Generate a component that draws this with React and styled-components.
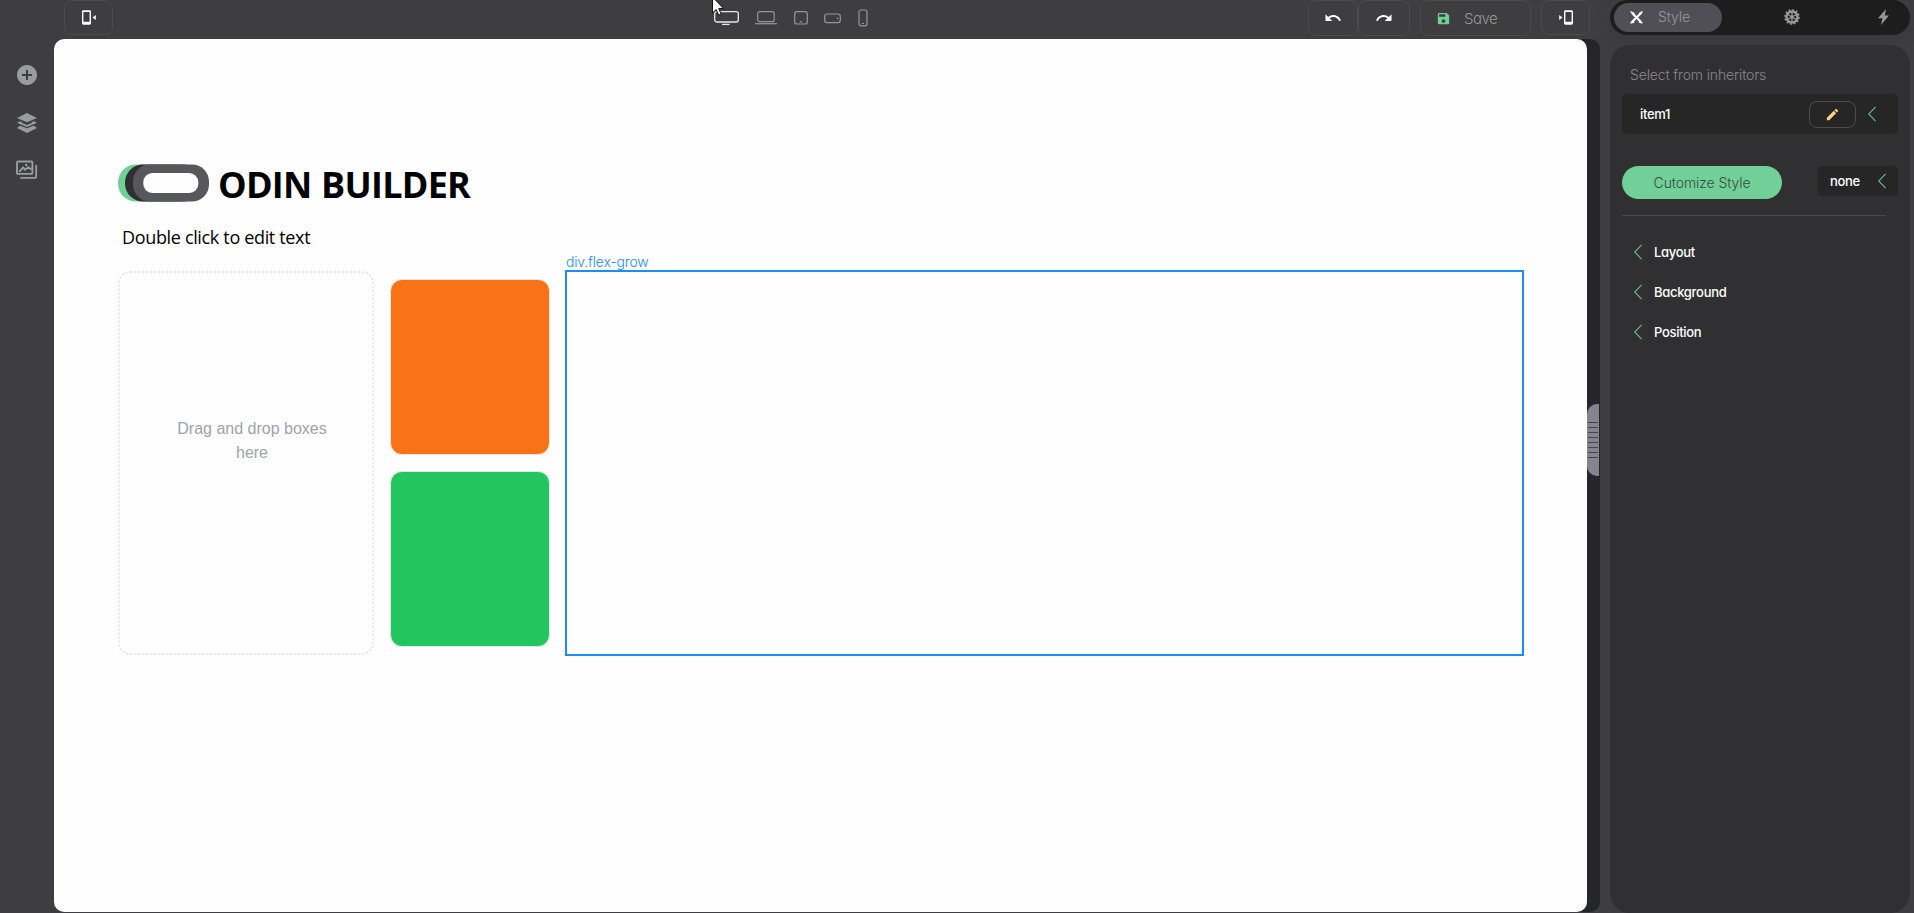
import React from "react";
import styled, { createGlobalStyle } from "styled-components";
import { MdUndo, MdRedo, MdSave, MdAddCircle, MdEdit } from "react-icons/md";

const Global = createGlobalStyle`
  * { box-sizing: border-box; }
  html, body { margin: 0; height: 100%; overflow: hidden; background: #3e3e40; }
  button { font: inherit; color: inherit; background: none; padding: 0; }
  svg { display: block; flex: none; }
`;

const Shell = styled.div`
  display: flex;
  width: 1914px;
  height: 913px;
  background: #3e3e40;
  font-family: Inter, "Liberation Sans", sans-serif;
  font-feature-settings: "cv11";
  color: #fff;
`;

const Workspace = styled.div`
  display: flex;
  flex-direction: column;
  width: 1600px;
  height: 912px;
`;

const Toolbar = styled.header`
  display: flex;
  align-items: flex-start;
  height: 39px;
  padding: 0 10px 0 64px;
`;

const ToolGroup = styled.div`
  display: flex;
  gap: ${(p) => p.$gap || 0}px;
`;

const ToolButton = styled.button`
  display: flex;
  align-items: center;
  justify-content: center;
  width: ${(p) => p.$w || 49}px;
  height: ${(p) => p.$h || 35}px;
  border: 1px solid #4b4b4e;
  border-radius: 8px;
`;

const Label = styled.span`
  font-size: ${(p) => p.$size || 14}px;
  font-weight: ${(p) => p.$weight || 300};
  letter-spacing: ${(p) => p.$ls || 0}px;
  color: ${(p) => p.$color || "#98989b"};
  line-height: 20px;
  white-space: nowrap;
`;

const StrongLabel = styled(Label)`
  font-size: 13px;
  font-weight: 500;
  letter-spacing: -0.3px;
  color: #fff;
`;

const SaveButton = styled(ToolButton)`
  justify-content: flex-start;
  padding: 1px 0 0 15px;
  gap: 13px;
`;

const Devices = styled.div`
  display: flex;
  height: 36px;
  align-items: center;
  gap: 16.4px;
  margin: 0 auto 0 601px;
  color: #97979a;
`;

const Cursor = styled.svg`
  position: absolute;
  left: 711px;
  top: -4px;
`;

const Body = styled.div`
  display: flex;
  flex: 1;
`;

const Sidebar = styled.nav`
  display: flex;
  flex-direction: column;
  align-items: center;
  width: 54px;
  padding-top: 24px;
  gap: 26px;
  color: #9b9c9f;
`;

const Stage = styled.main`
  display: flex;
  align-items: center;
  width: 1546px;
  background: #252629;
  border-radius: 10px;
`;

const Page = styled.section`
  width: 1533px;
  height: 873px;
  padding: 125px 63px 0 64px;
  background: #fefefe;
  border-radius: 10px;
`;

const Handle = styled.div`
  display: flex;
  flex-direction: column;
  gap: 4px;
  width: 12px;
  height: 72px;
  margin-top: -72px;
  padding: 18px 1px 0;
  background: #858490;
  border-radius: 10px 0 0 10px;
`;

const Grip = styled.i`
  height: 1px;
  background: #44444d;
`;

const Brand = styled.div`
  display: flex;
  align-items: center;
  height: 38px;
  gap: 8px;
`;

const Title = styled.h1`
  margin: 4px 0 0;
  color: #000;
  font: 700 36px/38px "Open Sans", sans-serif;
  letter-spacing: -0.75px;
  word-spacing: 1px;
  white-space: nowrap;
`;

const Subtitle = styled.p`
  margin: 23px 0 22px 4px;
  color: #000;
  font: 400 18px/24px "Open Sans", sans-serif;
  letter-spacing: -0.34px;
`;

const Boxes = styled.div`
  display: flex;
  height: 385px;
`;

const DropZone = styled.div`
  display: flex;
  align-items: center;
  justify-content: center;
  width: 256px;
  height: 384px;
  padding: 0 43px 45px 55px;
  margin-right: 16px;
  border: 2px dotted #e5e7eb;
  border-radius: 12px;
  color: #9ca3af;
  font: 400 16px/24px "Liberation Sans", sans-serif;
  text-align: center;
`;

const Tiles = styled.div`
  display: flex;
  flex-direction: column;
  gap: 16px;
  width: 160px;
  padding-top: 8px;
  margin-right: 15px;
`;

const Tile = styled.div`
  height: 176px;
  border: 1px solid #e5e7eb;
  border-radius: 12px;
  background: ${(p) => p.$color};
`;

const Selected = styled.div`
  position: relative;
  flex: 1;
  margin-top: -1px;
  border: 2px solid #1d8df2;
`;

const Tag = styled(Label)`
  position: absolute;
  left: -1px;
  top: -20px;
`;

const Inspector = styled.aside`
  display: flex;
  flex-direction: column;
  gap: 10px;
  width: 314px;
  padding: 0 4px 0 10px;
`;

const Tabs = styled.div`
  display: flex;
  align-items: center;
  justify-content: space-between;
  height: 35px;
  padding: 0 21px 1px 4px;
  background: #1d1d1d;
  border-radius: 18px;
  color: #98989b;
  box-shadow: 0 4px 12px #39393b;
`;

const ActiveTab = styled.div`
  display: flex;
  align-items: center;
  gap: 15px;
  width: 108px;
  height: 29px;
  padding-left: 16px;
  margin-right: -16px;
  border-radius: 15px;
  background: #504f55;
`;

const Panel = styled.div`
  display: flex;
  flex-direction: column;
  height: 868px;
  padding: 20px 12px;
  border-radius: 20px;
  background: #303032;
`;

const PanelHeading = styled.div`
  display: flex;
  align-items: center;
  height: 20px;
  padding: 0 0 0 8px;
`;

const ItemRow = styled.div`
  display: flex;
  align-items: center;
  height: 40px;
  margin-top: 9px;
  padding: 0 22px 0 18px;
  border-radius: 4px;
  background: #262626;
`;

const EditButton = styled(ToolButton)`
  width: 47px;
  height: 27px;
  margin: 1px 12px 0 auto;
  border-color: #4d4d50;
`;

const StyleRow = styled.div`
  display: flex;
  align-items: flex-start;
  justify-content: space-between;
  height: 33px;
  margin-top: 32px;
`;

const CustomizeButton = styled.button`
  width: 160px;
  height: 33px;
  border: 0;
  border-radius: 17px;
  background: #71d097;
`;

const StateSelect = styled.div`
  display: flex;
  align-items: center;
  justify-content: space-between;
  width: 80px;
  height: 30px;
  padding: 0 12px;
  border-radius: 4px;
  background: #262626;
`;

const Divider = styled.hr`
  width: 264px;
  height: 1px;
  margin: 16px 0;
  border: 0;
  background: #4a4a4c;
`;

const Section = styled.div`
  display: flex;
  align-items: center;
  gap: 12px;
  height: 40px;
  padding-left: 12px;
`;

const Chevron = () => (
  <svg width="8" height="16" viewBox="0 0 8 16" fill="none" stroke="#66bd8b" strokeWidth="1.1">
    <path d="M7.6 .8.7 8l6.9 7.2" />
  </svg>
);

const PhonePanel = ({ flip }) => (
  <svg width="14" height="15" viewBox="0 0 14 15" fill="#fff">
    <g transform={flip ? "translate(14 0) scale(-1 1)" : undefined}>
      <path fillRule="evenodd" d="M1.4.3h6.2A1.4 1.4 0 0 1 9 1.7v11.6a1.4 1.4 0 0 1-1.4 1.4H1.4A1.4 1.4 0 0 1 0 13.3V1.7A1.4 1.4 0 0 1 1.4.3ZM1.4 2v9.7h6.2V2Z" />
      <path d="M13.8 5v5l-3.300-2.500Z" />
    </g>
  </svg>
);

const Logo = () => (
  <svg width="92" height="38" viewBox="0 0 92 38">
    <rect x="0" y=".5" width="76" height="37" rx="18" fill="#71d097" />
    <rect x="7" y=".5" width="76" height="37" rx="18" fill="#303033" />
    <rect x="15" y=".5" width="76" height="37" rx="17" fill="#58575c" />
    <rect x="25.300" y="9" width="55" height="20" rx="9" fill="#fefefe" />
  </svg>
);

const LayersIcon = () => (
  <svg width="20" height="20" viewBox="0 0 20 20" fill="currentColor">
    <path d="M10 0 20 4.900 10 9.300 0 4.900Z" />
    <path d="M0 10 3 8.400l2.600 1.100L4.700 10 10 12.200 15.300 10l-.9-.5L17 8.400 20 10 10 14.300Z" transform="translate(0 -.2)" />
    <path d="M0 15 3.200 12.800 10 15.200l6.800-2.400L20 15 10 20Z" />
  </svg>
);

const GalleryIcon = () => (
  <svg width="22" height="21" viewBox="0 -1 22 20" fill="none" stroke="currentColor">
    <rect x="1" y="1" width="15.400" height="12.400" rx="1" strokeWidth="1.900" />
    <path d="M4.300 17.300h14.900a1 1 0 0 0 1-1V4.500" strokeWidth="1.800" />
    <path d="M3.200 11.400 7.100 6.900l1.900 2.300 3.300-2.300 3.200 2" strokeWidth="1.900" />
    <circle cx="10.300" cy="4.500" r="1.200" fill="currentColor" stroke="none" />
  </svg>
);

const DesignIcon = () => (
  <svg width="13" height="13" viewBox="0 0 13 13" fill="none" stroke="#fff" strokeLinecap="round">
    <path d="M2.500 2.500 10.500 10.500" strokeWidth="2.200" />
    <path d="M11 2 7.500 5.500M5.500 7.500 2 11" strokeWidth="2.200" />
    <path d="M1 .9 4 2.300M11.900 11.900 9.500 11M12 .9 10 2.200M.9 11.900l2.800-.7" strokeWidth="1.400" />
  </svg>
);

const WheelIcon = () => (
  <svg width="16" height="16" viewBox="0 0 16 16" fill="none" stroke="currentColor">
    <circle cx="8" cy="8" r="7.100" strokeWidth="1.500" strokeDasharray="1.860 1.860" />
    <circle cx="8" cy="8" r="5.500" strokeWidth="2.500" />
    <circle cx="8" cy="8" r="1.700" fill="currentColor" stroke="none" />
    <path d="M8 3v10M3.700 5.500l8.600 5M12.300 5.500l-8.600 5" strokeWidth="1.300" />
  </svg>
);

const BoltIcon = () => (
  <svg width="11" height="16" viewBox="0 0 11 16" fill="currentColor">
    <path d="M8 0 0 9.300h4.500L3 16 11 6.500H6.800Z" />
  </svg>
);

export default function App() {
  return (
    <Shell>
      <Global />
      <Workspace>
        <Toolbar>
          <ToolButton aria-label="Toggle left panel"><PhonePanel /></ToolButton>
          <Devices>
            <svg width="25" height="15" viewBox="0 0 25 15" fill="none" stroke="#e8e8ea" strokeWidth="1.300">
              <rect x=".7" y=".7" width="23.600" height="10.300" rx="2" />
              <path d="M8 13.400h7.500" />
            </svg>
            <svg width="22" height="14" viewBox="0 0 22 14" fill="none" stroke="currentColor" strokeWidth="1.200">
              <rect x="2.700" y=".7" width="16.500" height="10" rx="2" />
              <path d="M0 12.700h22" />
            </svg>
            <svg width="14" height="14" viewBox="0 0 14 14" fill="none" stroke="currentColor" strokeWidth="1.200">
              <rect x=".7" y=".7" width="12.600" height="12.300" rx="2.300" />
              <path d="M5.700 10.800h2.600" />
            </svg>
            <svg width="17" height="11" viewBox="0 0 17 11" fill="none" stroke="currentColor" strokeWidth="1.200">
              <rect x=".7" y="1" width="15.600" height="8.600" rx="2.300" />
              <path d="M13.500 4.500v1.800" />
            </svg>
            <svg width="10" height="18" viewBox="0 0 10 18" fill="none" stroke="currentColor" strokeWidth="1.200">
              <rect x="1" y="1" width="8" height="15.800" rx="2" />
              <path d="M4 14.500h2" />
            </svg>
          </Devices>
          <ToolGroup $gap={10}>
            <ToolGroup>
              <ToolButton $w={50} $h={36} aria-label="Undo"><MdUndo size={18} color="#fff" /></ToolButton>
              <ToolButton $w={52} $h={36} aria-label="Redo"><MdRedo size={18} color="#fff" /></ToolButton>
            </ToolGroup>
            <SaveButton $w={111} $h={36}>
              <MdSave size={15} color="#71d097" />
              <Label $size={15} $ls={-0.5}>Save</Label>
            </SaveButton>
            <ToolButton aria-label="Toggle right panel"><PhonePanel flip /></ToolButton>
          </ToolGroup>
        </Toolbar>
        <Body>
          <Sidebar>
            <MdAddCircle size={24} />
            <LayersIcon />
            <GalleryIcon />
          </Sidebar>
          <Stage>
            <Page>
              <Brand>
                <Logo />
                <Title>ODIN BUILDER</Title>
              </Brand>
              <Subtitle>Double click to edit text</Subtitle>
              <Boxes>
                <DropZone>Drag and drop boxes here</DropZone>
                <Tiles>
                  <Tile $color="#f97316" />
                  <Tile $color="#22c55e" />
                </Tiles>
                <Selected>
                  <Tag $color="#1d8df2" $ls={-0.18}>div.flex-grow</Tag>
                </Selected>
              </Boxes>
            </Page>
            <Handle>
              {Array.from({ length: 8 }, (_, i) => <Grip key={i} />)}
            </Handle>
          </Stage>
        </Body>
      </Workspace>
      <Inspector>
        <Tabs>
          <ActiveTab>
            <DesignIcon />
            <Label $ls={-0.1}>Style</Label>
          </ActiveTab>
          <WheelIcon />
          <BoltIcon />
        </Tabs>
        <Panel>
          <PanelHeading><Label $color="#8a8a8d" $ls={-0.14}>Select from inheritors</Label></PanelHeading>
          <ItemRow>
            <StrongLabel>item1</StrongLabel>
            <EditButton aria-label="Edit"><MdEdit size={15} color="#fdd07d" /></EditButton>
            <Chevron />
          </ItemRow>
          <StyleRow>
            <CustomizeButton><Label $color="#3c4a44" $ls={-0.1}>Cutomize Style</Label></CustomizeButton>
            <StateSelect>
              <StrongLabel>none</StrongLabel>
              <Chevron />
            </StateSelect>
          </StyleRow>
          <Divider />
          {["Layout", "Background", "Position"].map((name) => (
            <Section key={name}>
              <Chevron />
              <StrongLabel>{name}</StrongLabel>
            </Section>
          ))}
        </Panel>
      </Inspector>
      <Cursor width="14" height="22" viewBox="0 0 14 22" fill="#fff" stroke="#111" strokeWidth="1">
        <path d="M1.500 1v16l3.700-3.500 2.500 5.700 2.500-1.100-2.500-5.500h5Z" />
      </Cursor>
    </Shell>
  );
}
